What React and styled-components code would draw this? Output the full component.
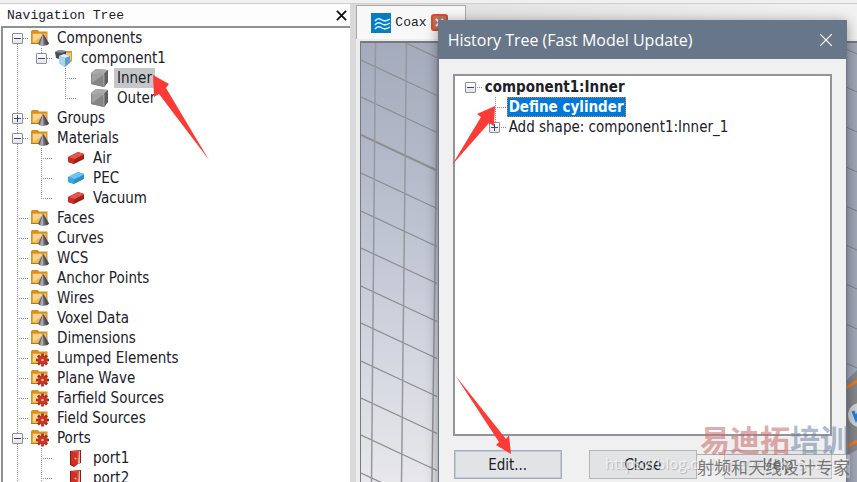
import React from 'react';
import styled, { createGlobalStyle, css } from 'styled-components';

const GlobalStyle = createGlobalStyle`
  * { box-sizing: border-box; }
  body { margin: 0; background: #f0f0f0; font-family: "DejaVu Sans Condensed", "Noto Sans", sans-serif; font-size: 15px; color: #20202a; overflow: hidden; }
  button { font: inherit; color: inherit; padding: 0; margin: 0; border: 0; background: none; }
  ul { list-style: none; margin: 0; padding: 0; }
  svg { display: block; }
`;

const Page = styled.main`
  position: relative;
  display: flex;
  flex-direction: column;
  height: 100vh;
  overflow: hidden;
`;
const TopStrip = styled.div`
  flex: none;
  height: 4px;
  background: #f0f0f0;
  border-bottom: 1px solid #cfcfcf;
`;
const Workspace = styled.div`
  flex: 1;
  min-height: 0;
  display: grid;
  grid-template-columns: calc(41% - 1px) 1fr;
`;

const NavPanel = styled.aside`
  display: flex;
  flex-direction: column;
  min-height: 0;
  background: #fdfdfd;
`;
const NavHeader = styled.header`
  flex: none;
  display: flex;
  align-items: center;
  justify-content: space-between;
  height: 22px;
  padding: 0 3px 0 7px;
`;
const NavTitle = styled.h2`
  margin: 0;
  font: 400 13px "Liberation Mono", monospace;
`;
const IconButton = styled.button`
  display: grid;
  place-items: center;
  width: ${p => p.$size}px;
  height: ${p => p.$size}px;
`;
const NavTree = styled.ul`
  flex: 1;
  min-height: 0;
  overflow: hidden;
  margin-left: 1px;
  padding-left: 2px;
  border-top: 2px solid #8f8f94;
  border-left: 2px solid #8f8f94;
  background: #fff;
`;
const Row = styled.div`
  display: flex;
  align-items: center;
  height: 20px;
  white-space: nowrap;
`;
const dots = '#8c8c8c 0 1px, transparent 1px 2px';
const Rail = styled.span`
  flex: none;
  display: grid;
  place-items: center;
  align-self: stretch;
  width: 24px;
  background-repeat: no-repeat;
  background-image: repeating-linear-gradient(180deg, ${dots}), repeating-linear-gradient(90deg, ${dots});
  background-position: 12px ${p => (p.$kind === 'start' ? '10px' : '0')}, 12px 10px;
  background-size:
    1px ${p => ({ pass: '20px', tee: '20px', end: '10px', start: '10px' }[p.$kind] || '0')},
    ${p => (p.$kind === 'pass' || p.$kind === 'blank' ? '0' : '12px')} 1px;
`;
const Expander = styled.button`
  && {
    display: grid;
    place-items: center;
    width: 11px;
    height: 11px;
    border: 1px solid #8e8e93;
    border-radius: 1px;
    background: linear-gradient(#fff, #e4e4e6);
  }
`;
const IconSlot = styled.span`
  flex: none;
  display: grid;
  place-items: center;
  width: 20px;
  margin: 0 4px 0 ${p => (p.$leaf ? 13 : 1)}px;
`;
const Label = styled.span`
  padding: 0 ${p => (p.$history ? 2 : 3)}px;
  line-height: 20px;
  background: ${p => (p.$selected ? '#c6c6c9' : 'transparent')};
  ${p => p.$strong && css`font-weight: 700;`}
  ${p => p.$active && css`
    color: #fff;
    background: #0078d7;
    outline: 1px dotted #d98a3a;
    outline-offset: -1px;
  `}
`;

const Viewer = styled.section`
  display: flex;
  flex-direction: column;
  min-width: 0;
  border-left: 6px solid #d9d9d9;
  background: #ececec;
`;
const TabBar = styled.div`
  flex: none;
  display: flex;
  align-items: flex-end;
  height: 35px;
  background: linear-gradient(90deg, #dedede, #f2f2f2);
`;
const Tab = styled.button`
  && {
    display: flex;
    align-items: center;
    gap: 4px;
    width: 110px;
    height: 34px;
    padding-left: 14px;
    border: 1px solid #a9a9a9;
    border-bottom: 0;
    background: #f8f8f8;
    font: 400 13px "Liberation Mono", monospace;
  }
`;
const CanvasFrame = styled.div`
  flex: 1;
  min-height: 0;
  display: flex;
  margin: 2px 0 0 4px;
  border: solid #77797e;
  border-width: 2px 0 0 1px;
  overflow: hidden;
  svg { flex: 1; }
`;

const Dialog = styled.section`
  position: absolute;
  top: 20px;
  right: 10px;
  bottom: -14px;
  width: calc(48% - 2px);
  min-width: 380px;
  display: flex;
  flex-direction: column;
  background: #f0f0f0;
  border: 1px solid #68768a;
  box-shadow: 0 2px 12px rgba(0, 0, 0, 0.4);
`;
const DialogHeader = styled.header`
  flex: none;
  display: flex;
  align-items: center;
  justify-content: space-between;
  height: 38px;
  padding: 0 13px 0 9px;
  background: #68768a;
  color: #fff;
`;
const DialogTitle = styled.h1`
  margin: 0;
  font: 400 16px "Open Sans", sans-serif;
`;
const HistoryTree = styled.ul`
  flex: 1;
  margin: 15px 14px 14px;
  padding: 1px 4px;
  border: 2px solid #92949c;
  background: #fff;
`;
const Actions = styled.footer`
  flex: none;
  display: flex;
  justify-content: space-between;
  padding: 0 14px 16px 15px;
`;
const ActionButton = styled.button`
  && {
    width: 108px;
    height: 29px;
    border: 1px solid ${p => (p.$primary ? '#a3adbf' : '#b5b5b5')};
    outline: ${p => (p.$primary ? '1px solid #c3cad6' : 'none')};
    outline-offset: -2px;
    background: #e2e3e5;
  }
`;

const Overlay = styled.svg`
  position: absolute;
  inset: 0;
  pointer-events: none;
`;
const Watermark = styled.div`
  position: absolute;
  right: 7px;
  bottom: 4px;
  pointer-events: none;
  text-align: right;
  white-space: nowrap;
  font-family: "Noto Sans CJK SC", sans-serif;
`;
const Brand = styled.div`
  font-size: 30px;
  line-height: 32px;
  font-weight: 700;
  color: rgba(200, 100, 100, 0.55);
  span { color: rgba(105, 130, 165, 0.55); }
`;
const Slogan = styled.div`
  padding-top: 1px;
  border-top: 1px solid rgba(130, 130, 130, 0.6);
  background: rgba(240, 240, 240, 0.3);
  font-size: 17px;
  line-height: 22px;
  color: rgba(100, 100, 100, 0.85);
`;
const BlogUrl = styled.div`
  position: absolute;
  right: 8px;
  bottom: 8px;
  font: 400 15px/22px "Open Sans", sans-serif;
  color: rgba(255, 255, 255, 0.7);
  text-shadow: 1px 1px 1px rgba(110, 110, 110, 0.4);
  pointer-events: none;
`;

const Cross = ({ size, color, width = 1 }) => (
  <svg width={size} height={size} viewBox="0 0 12 12" aria-hidden="true">
    <path d="M1 1 11 11M11 1 1 11" stroke={color} strokeWidth={width} fill="none" />
  </svg>
);

const FolderShape = () => (
  <>
    <path d="M1 3.500 2 2h6l1 1.500h8.500V15H1z" fill="#d89024" />
    <path d="M2.500 5.500h14V15h-14z" fill="#efb953" />
    <path d="M3 6h13L3 14z" fill="#f7d58f" />
    <path d="M1 15.500h16.500" stroke="#b97416" />
  </>
);
const FolderCone = () => (
  <svg width="20" height="20" viewBox="0 0 20 20" aria-hidden="true">
    <FolderShape />
    <path d="M13 5.500 8 15.500c1 3 9 3 11 0z" fill="#686970" />
    <path d="M13 5.500 10 16.500c1 .8 2.500 1 3.500 1z" fill="#a9aab0" />
    <path d="M13 5.500 16 17.300c1.500-.4 2.400-.9 3-1.800z" fill="#4c4d55" />
  </svg>
);
const FolderGear = () => (
  <svg width="20" height="20" viewBox="0 0 20 20" aria-hidden="true">
    <FolderShape />
    <g stroke="#ad251b" strokeWidth="2.600">
      <path d="M12.500 5.500v13M6 12h13M8 7.500l9 9M17 7.500l-9 9" />
    </g>
    <circle cx="12.500" cy="12" r="4.600" fill="#c5342a" />
    <circle cx="12.500" cy="12" r="1.300" fill="#f1c36a" />
  </svg>
);
const ComponentIcon = () => (
  <svg width="20" height="20" viewBox="0 0 20 20" aria-hidden="true">
    <path d="M9 3h9v10l-4 3H9z" fill="#dc9a30" />
    <path d="M12 5h5v7h-5z" fill="#f5c873" />
    <path d="m1 4 4-2 7 1v7l-4 2-6-2z" fill="#4a4d53" />
    <path d="m1 4 7 1 4-2-7-1z" fill="#8b8e94" />
    <path d="m5 8 5-2 6 2v7l-5 4-6-4z" fill="#5b9fca" />
    <path d="m5 8 6 2 5-2-6-2z" fill="#ddf2fc" />
    <path d="m5 8 6 2v9l-6-4z" fill="#a8d6ef" />
  </svg>
);
const SolidIcon = () => (
  <svg width="20" height="20" viewBox="0 0 20 20" aria-hidden="true">
    <path d="m1 5 5-4 12 1v12l-4 5-13-3z" fill="#777" />
    <path d="m1 5 5-4 12 1-4 4z" fill="#a9a9a9" />
    <path d="m1 5 13 1v13L1 16z" fill="#858585" />
    <path d="m2 6 11 1L2 15z" fill="#a0a0a0" />
    <path d="m14 6 4-4v12l-4 5z" fill="#5f5f5f" />
    <path d="M1.500 5.300 14 6.400v12" fill="none" stroke="#c4c4c4" strokeWidth=".7" />
  </svg>
);
const Brick = ({ blue }) => {
  const c = blue ? ['#2b8fc9', '#6cc5ee', '#3ba6dd'] : ['#a51d16', '#e0564a', '#c92d23'];
  return (
    <svg width="16" height="14" viewBox="0 0 16 14" aria-hidden="true">
      <path d="m0 6 10-5 6 2v5L6 13l-6-2z" fill={c[0]} />
      <path d="m0 6 10-5 6 2L6 8z" fill={c[1]} />
      <path d="m0 6 6 2v5l-6-2z" fill={c[2]} />
      <path d="m6 8 10-5" stroke={c[1]} />
    </svg>
  );
};
const PortIcon = () => (
  <svg width="12" height="18" viewBox="0 0 12 18" aria-hidden="true">
    <path d="M0 2 11 1v13l-3 1-4 3-4-2z" fill="#8e1b15" />
    <path d="m1 2 9-.500v12L7 15z" fill="#d9483b" />
    <path d="m1 2 6 2v12l-2 1-4-2z" fill="#cf3028" />
    <path d="m9 2 1 0v12l-2 1z" fill="#f0b0a0" />
    <circle cx="5.500" cy="9.500" r="1" fill="#f5c34c" />
  </svg>
);
const WaveLogo = () => (
  <svg width="20" height="20" viewBox="0 0 20 20" aria-hidden="true">
    <path d="M0 0h20v20H0z" fill="#087ec0" />
    <path d="M4 8c2-3 4-3 7-1s5 1 8-1M4 12c2-3 4-3 7-1s5 1 8-1M4 16c2-3 4-3 7-1s5 1 8-1" fill="none" stroke="#d6f0fb" strokeWidth="1.500" />
  </svg>
);
const TabClose = () => (
  <svg width="17" height="17" viewBox="0 0 17 17" aria-hidden="true">
    <rect x="1" y="1" width="15" height="15" rx="2" fill="#b8775a" stroke="#e8452f" strokeWidth="2" />
    <path d="m5 5 7 7m0-7-7 7" stroke="#eee" strokeWidth="2" />
  </svg>
);

const icons = {
  cone: <FolderCone />,
  gear: <FolderGear />,
  component: <ComponentIcon />,
  solid: <SolidIcon />,
  red: <Brick />,
  blue: <Brick blue />,
  port: <PortIcon />,
};

const navRows = [
  { label: 'Components', icon: 'cone', rails: ['start'], toggle: '-' },
  { label: 'component1', icon: 'component', rails: ['pass', 'end'], toggle: '-' },
  { label: 'Inner', icon: 'solid', rails: ['pass', 'blank', 'tee'], leaf: true, selected: true },
  { label: 'Outer', icon: 'solid', rails: ['pass', 'blank', 'end'], leaf: true },
  { label: 'Groups', icon: 'cone', rails: ['tee'], toggle: '+' },
  { label: 'Materials', icon: 'cone', rails: ['tee'], toggle: '-' },
  { label: 'Air', icon: 'red', rails: ['pass', 'tee'], leaf: true },
  { label: 'PEC', icon: 'blue', rails: ['pass', 'tee'], leaf: true },
  { label: 'Vacuum', icon: 'red', rails: ['pass', 'end'], leaf: true },
  ...['Faces', 'Curves', 'WCS', 'Anchor Points', 'Wires', 'Voxel Data', 'Dimensions']
    .map(label => ({ label, icon: 'cone', rails: ['tee'] })),
  ...['Lumped Elements', 'Plane Wave', 'Farfield Sources', 'Field Sources']
    .map(label => ({ label, icon: 'gear', rails: ['tee'] })),
  { label: 'Ports', icon: 'gear', rails: ['tee'], toggle: '-' },
  { label: 'port1', icon: 'port', rails: ['pass', 'tee'], leaf: true },
  { label: 'port2', icon: 'port', rails: ['pass', 'tee'], leaf: true },
];
const historyRows = [
  { label: 'component1:Inner', rails: ['root'], toggle: '-', strong: true },
  { label: 'Define cylinder', rails: ['blank', 'tee'], strong: true, active: true },
  { label: 'Add shape: component1:Inner_1', rails: ['blank', 'end'], toggle: '+' },
];

function TreeRow({ row, history }) {
  return (
    <li role="treeitem" aria-selected={!!(row.selected || row.active)} aria-level={row.rails.length}>
      <Row>
        {row.rails.map((kind, i) => (
          <Rail key={i} $kind={kind}>
            {row.toggle && i === row.rails.length - 1 && (
              <Expander type="button" aria-label={`${row.toggle === '-' ? 'Collapse' : 'Expand'} ${row.label}`}>
                <svg width="7" height="7" viewBox="0 0 7 7" aria-hidden="true">
                  <path d={row.toggle === '-' ? 'M0 3.500h7' : 'M0 3.500h7M3.500 0v7'} stroke="#33468c" />
                </svg>
              </Expander>
            )}
          </Rail>
        ))}
        {row.icon && <IconSlot $leaf={row.leaf}>{icons[row.icon]}</IconSlot>}
        <Label $history={history} $selected={row.selected} $strong={row.strong} $active={row.active}>{row.label}</Label>
      </Row>
    </li>
  );
}

const slants = [-15, 22, 60, 97, 135, 173, 211, 248, 286, 323, 361, 398, 435, 473];

function ModelCanvas() {
  return (
    <svg viewBox="361 43 496 439" preserveAspectRatio="xMinYMin slice" role="img" aria-label="3D model view">
      <defs>
        <linearGradient id="sky" x1="0" y1="0" x2="0" y2="1">
          <stop offset="0" stopColor="#a4abbc" />
          <stop offset=".3" stopColor="#b5bbca" />
          <stop offset=".7" stopColor="#d2d6e0" />
          <stop offset="1" stopColor="#e8e8ea" />
        </linearGradient>
      </defs>
      <path d="M361 43h496v439H361z" fill="url(#sky)" />
      <g stroke="#8d8e91" fill="none">
        {slants.map(y => (
          <path key={y} d={`M361 ${y}l76 35.500`} strokeWidth={y === 135 ? 2 : 1.300} />
        ))}
        <path d="M375.500 43 371.500 482M406.500 43 401.500 482M438 43 432 482" stroke="#96989d" strokeWidth="1.500" />
      </g>
      <path d="M846 43h11v439h-11z" fill="#a2a7b8" />
      <path d="m846 49 11 5M846 87l11 5M846 127l11 5M846 167l11 5M846 206l11 5M846 245l11 5M846 284l11 5M846 324l11 5M846 363l11 5" stroke="#7f828a" />
      <path d="m846 381 11-11v80l-11 6z" fill="#858689" />
      <path d="m846 388 11-7M846 447l11-6" stroke="#ee7a22" strokeWidth="3" />
      <circle cx="860" cy="415" r="12" fill="#cfd2d8" />
      <path d="m853 411 3 8 3-8" fill="none" stroke="#1583d8" strokeWidth="3" />
    </svg>
  );
}

export default function App() {
  return (
    <Page>
      <GlobalStyle />
      <TopStrip />
      <Workspace>
        <NavPanel>
          <NavHeader>
            <NavTitle>Navigation Tree</NavTitle>
            <IconButton $size={12} type="button" aria-label="Close navigation tree">
              <Cross size={11} color="#111" width={2} />
            </IconButton>
          </NavHeader>
          <NavTree role="tree" aria-label="Navigation Tree">
            {navRows.map(row => <TreeRow key={row.label} row={row} />)}
          </NavTree>
        </NavPanel>
        <Viewer>
          <TabBar>
            <Tab type="button"><WaveLogo />Coax<TabClose /></Tab>
          </TabBar>
          <CanvasFrame><ModelCanvas /></CanvasFrame>
        </Viewer>
      </Workspace>

      <Dialog role="dialog" aria-labelledby="history-title">
        <DialogHeader>
          <DialogTitle id="history-title">History Tree (Fast Model Update)</DialogTitle>
          <IconButton $size={14} type="button" aria-label="Close dialog"><Cross size={14} color="#fff" /></IconButton>
        </DialogHeader>
        <HistoryTree role="tree" aria-label="History">
          {historyRows.map(row => <TreeRow key={row.label} row={row} history />)}
        </HistoryTree>
        <Actions>
          <ActionButton type="button" $primary>Edit...</ActionButton>
          <ActionButton type="button">Close</ActionButton>
          <ActionButton type="button">Help</ActionButton>
        </Actions>
      </Dialog>

      <BlogUrl>https://blog.csdn.net/qq_41542947</BlogUrl>
      <Watermark>
        <Brand>易迪拓<span>培训</span></Brand>
        <Slogan>射频和天线设计专家</Slogan>
      </Watermark>
      <Overlay width="857" height="482" viewBox="0 0 857 482" aria-hidden="true">
        <g fill="#fb3b36">
          <path d="m153 75 16 9-3 4 43 72-50-66-5 3z" />
          <path d="m495 106-1 20-5-3-37 42 29-48-4-3z" />
          <path d="m511 454-15-9 3-3-44-67 51 64 3-4z" />
        </g>
      </Overlay>
    </Page>
  );
}
